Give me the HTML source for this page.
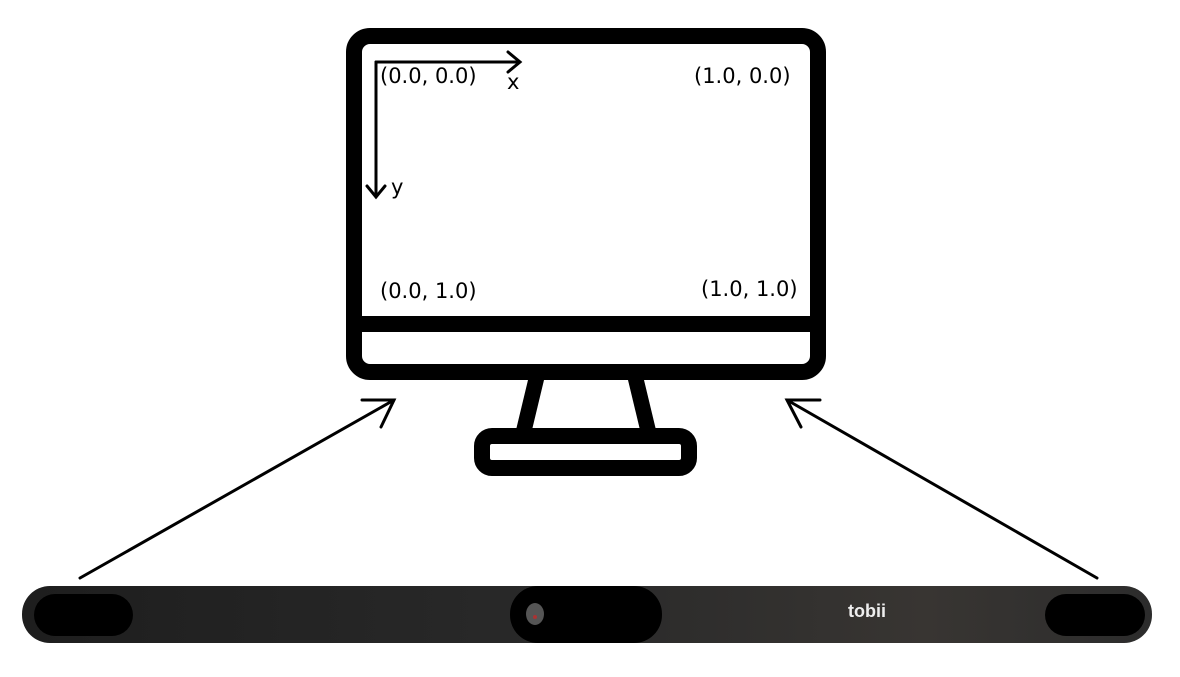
<!DOCTYPE html>
<html><head><style>
body{margin:0;width:1180px;height:677px;background:#fff;position:relative;overflow:hidden;font-family:"DejaVu Sans","Liberation Sans",sans-serif;}
.t{position:absolute;font-size:21px;color:#000;line-height:1;}
</style></head><body>
<svg width="1180" height="677" style="position:absolute;left:0;top:0">
<defs>
<linearGradient id="g" x1="0" x2="1"><stop offset="0" stop-color="#1e1e1e"/><stop offset="0.5" stop-color="#2a2a2a"/><stop offset="0.8" stop-color="#383532"/><stop offset="1" stop-color="#2c2c2c"/></linearGradient>
</defs>
<rect x="354" y="36" width="464" height="336" rx="16" fill="none" stroke="#000" stroke-width="16"/>
<rect x="354" y="316" width="464" height="16" fill="#000"/>
<polygon points="528,380 544,380 532,430 516,430" fill="#000"/>
<polygon points="628,380 644,380 656,430 640,430" fill="#000"/>
<rect x="482" y="436" width="207" height="32" rx="10" fill="none" stroke="#000" stroke-width="16"/>
<g stroke="#000" stroke-width="3" fill="none" stroke-linecap="round">
<path d="M376,62 H520 M508,52 L520,62 L508,72"/>
<path d="M376,62 V197 M367,186 L376,197 L385,186"/>
<path d="M80,578 L394,400 M362,400 L394,400 L381,427"/>
<path d="M1097,578 L787,400 M820,400 L787,400 L801,427"/>
</g>
<rect x="22" y="586" width="1130" height="57" rx="28" fill="url(#g)"/>
<rect x="34" y="594" width="99" height="42" rx="21" fill="#000"/>
<rect x="1045" y="594" width="100" height="42" rx="21" fill="#000"/>
<rect x="510" y="586" width="152" height="57" rx="28" fill="#000"/>
<ellipse cx="535" cy="614" rx="9" ry="11" fill="#555"/>
<circle cx="535" cy="617" r="2" fill="#a33"/>
</svg>
<div class="t" style="left:380px;top:66px">(0.0, 0.0)</div>
<div class="t" style="left:507px;top:72px">x</div>
<div class="t" style="left:694px;top:66px">(1.0, 0.0)</div>
<div class="t" style="left:391px;top:177px">y</div>
<div class="t" style="left:380px;top:281px">(0.0, 1.0)</div>
<div class="t" style="left:701px;top:279px">(1.0, 1.0)</div>
<div style="position:absolute;left:848px;top:601px;color:#eee;font-weight:bold;font-size:18px;font-family:'Liberation Sans',sans-serif">tobii</div>
</body></html>
